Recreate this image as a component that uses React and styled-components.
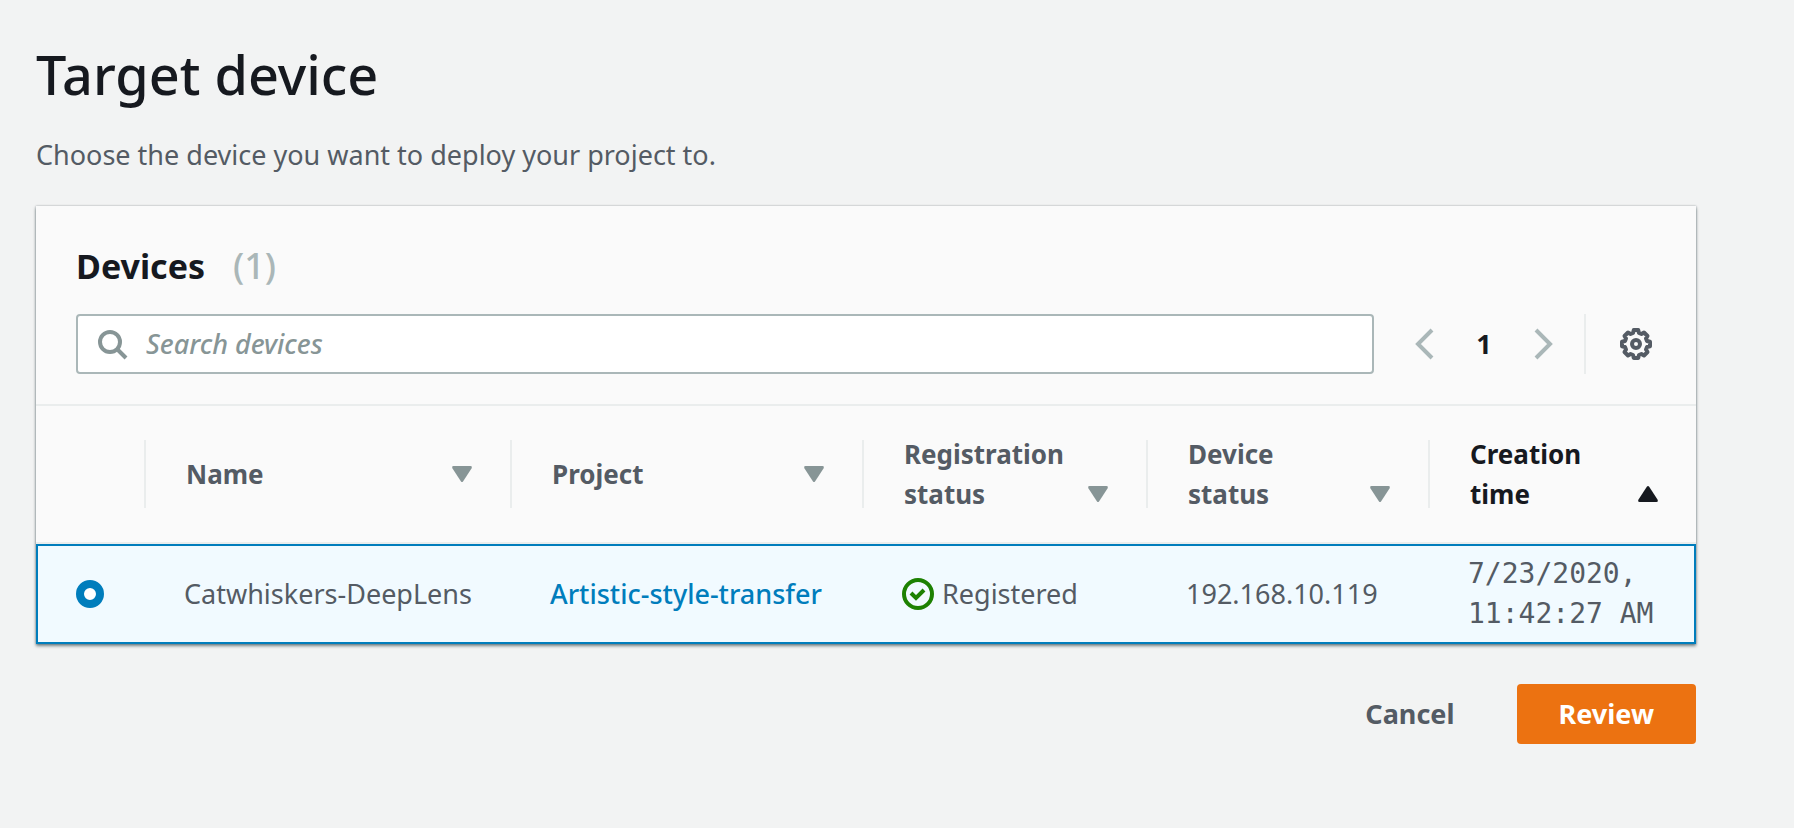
import React, { useState } from "react";
import styled, { createGlobalStyle } from "styled-components";

const color = {
  page: "#f2f3f3",
  panel: "#fafafa",
  line: "#eaeded",
  ink: "#16191f",
  text: "#545b64",
  muted: "#879596",
  faint: "#aab7b8",
  blue: "#007dbc",
  selected: "#f1faff",
  green: "#1d8102",
  orange: "#ec7211",
};

const GlobalStyle = createGlobalStyle`
  *, *::before, *::after { box-sizing: border-box; }
  body {
    margin: 0;
    background: ${color.page};
    color: ${color.text};
    font-family: "Noto Sans", "Open Sans", sans-serif;
    font-size: 27px;
    font-weight: 400;
    line-height: 40px;
  }
  button, input { font: inherit; color: inherit; }
`;

const Page = styled.main`
  padding: 38px 98px 84px 36px;
`;

const PageTitle = styled.h1`
  margin: 0;
  color: ${color.ink};
  font-size: 54px;
  font-weight: 500;
  line-height: 72px;
`;

const Intro = styled.p`
  margin: 25px 0 31px;
`;

const Panel = styled.section`
  background: ${color.panel};
  box-shadow: 0 2px 3px rgba(0, 28, 36, 0.5), 0 0 2px rgba(0, 28, 36, 0.3);
`;

const PanelHeader = styled.header`
  padding: 36px 40px 30px;
  border-bottom: 2px solid ${color.line};
`;

const PanelTitle = styled.h2`
  display: flex;
  gap: 28px;
  margin: 0 0 24px;
  color: ${color.ink};
  font-size: 34px;
  font-weight: 700;
  line-height: 48px;
`;

const Count = styled.span`
  color: ${color.faint};
  font-size: 36px;
  font-weight: 500;
`;

const Toolbar = styled.div`
  display: flex;
  align-items: center;
`;

const SearchBox = styled.label`
  display: flex;
  flex: 1;
  align-items: center;
  gap: 16px;
  height: 60px;
  padding: 0 20px;
  border: 2px solid ${color.faint};
  border-radius: 4px;
  background: #fff;
  color: ${color.muted};
`;

const SearchInput = styled.input`
  flex: 1;
  min-width: 0;
  padding: 0;
  border: 0;
  outline: 0;
  background: none;
  color: ${color.ink};

  &::placeholder {
    color: ${color.muted};
    font-style: italic;
    font-weight: 500;
    opacity: 1;
  }
`;

const Pagination = styled.nav`
  display: flex;
  align-items: center;
  gap: 28px;
  height: 60px;
  padding: 0 24px 0 34px;
  border-right: 2px solid ${color.line};
`;

const IconButton = styled.button`
  display: flex;
  padding: 0;
  border: 0;
  background: none;
  color: ${(p) => p.$tone};
  cursor: pointer;
`;

const PageNumber = styled.button`
  width: 32px;
  padding: 0;
  border: 0;
  background: none;
  color: ${color.ink};
  font-weight: 700;
`;

const Settings = styled.div`
  padding: 0 4px 0 34px;
`;

const Table = styled.table`
  width: 100%;
  table-layout: fixed;
  border-collapse: separate;
  border-spacing: 0;
  text-align: left;
`;

const Column = styled.col`
  width: ${(p) => p.$width}px;
`;

const HeadCell = styled.th`
  height: 138px;
  padding: 0;
  border-bottom: 2px solid ${color.line};
`;

const HeadContent = styled.div`
  display: flex;
  align-items: center;
  height: 68px;
  padding: 0 38px 0 40px;
  border-right: ${(p) => (p.$last ? "0" : `2px solid ${color.line}`)};
`;

const SortButton = styled.button`
  display: flex;
  flex: 1;
  align-items: flex-end;
  justify-content: space-between;
  gap: 12px;
  padding: 0;
  border: 0;
  background: none;
  color: ${(p) => (p.$active ? color.ink : color.text)};
  font-size: 26px;
  font-weight: 700;
  text-align: left;
  cursor: pointer;
`;

const SortIcon = styled.svg`
  flex: none;
  width: 20px;
  height: 40px;
  fill: ${(p) => (p.$active ? color.ink : color.muted)};
`;

const Cell = styled.td`
  height: 100px;
  padding: 0 36px 0 38px;
  border: solid ${color.blue};
  border-width: 2px 0;
  background: ${color.selected};

  &:first-child {
    border-left-width: 2px;
  }
  &:last-child {
    padding-right: 0;
    border-right-width: 2px;
  }
`;

const Radio = styled.input`
  display: block;
  width: 28px;
  height: 28px;
  margin: 0;
  border: 8px solid ${color.blue};
  border-radius: 50%;
  background: #fff;
  appearance: none;
`;

const ProjectLink = styled.a`
  color: ${color.blue};
  font-weight: 500;
  text-decoration: none;
`;

const Status = styled.span`
  display: flex;
  align-items: center;
  gap: 8px;
`;

const Timestamp = styled.time`
  display: block;
  font-family: "DejaVu Sans Mono", "Liberation Mono", monospace;
  font-size: 28px;
`;

const Actions = styled.footer`
  display: flex;
  justify-content: flex-end;
  gap: 20px;
  margin-top: 40px;
`;

const Button = styled.button`
  height: 60px;
  padding: 0 42px;
  border: 0;
  border-radius: 4px;
  background: ${(p) => (p.$primary ? color.orange : "transparent")};
  color: ${(p) => (p.$primary ? "#fff" : color.text)};
  font-weight: 700;
  cursor: pointer;
`;

const SearchIcon = () => (
  <svg width="32" height="32" viewBox="0 0 32 32" fill="none" stroke="currentColor" strokeWidth="4" aria-hidden="true">
    <circle cx="12" cy="14" r="10" />
    <path d="M19 21l9 9" />
  </svg>
);

const Chevron = ({ d }) => (
  <svg width="32" height="32" viewBox="0 0 32 32" fill="none" stroke="currentColor" strokeWidth="4" aria-hidden="true">
    <path d={d} />
  </svg>
);

const GearIcon = () => (
  <svg width="32" height="32" viewBox="0 0 32 32" fill="none" stroke="currentColor" strokeWidth="4" strokeLinejoin="round" aria-hidden="true">
    <path d="M13.8 2h4.4l.8 3 2.400 1 2.600-1.500 3.500 3.500L26 10.600l1 2.400 3 .8v4.400l-3 .8-1 2.400 1.500 2.600-3.500 3.500-2.600-1.500-2.400 1-.8 3h-4.400l-.8-3-2.400-1L8 27.500 4.500 24 6 21.400 5 19l-3-.8v-4.400l3-.8 1-2.400L4.500 8 8 4.500 10.600 6 13 5z" />
    <circle cx="16" cy="16" r="4" />
  </svg>
);

const CheckIcon = () => (
  <svg width="32" height="32" viewBox="0 0 32 32" fill="none" stroke={color.green} strokeWidth="4" aria-hidden="true">
    <circle cx="16" cy="16" r="14" />
    <path d="M9 15l5 5 8-8" />
  </svg>
);

const columns = [
  { label: "Name", width: 366 },
  { label: "Project", width: 352 },
  { label: "Registration status", width: 284 },
  { label: "Device status", width: 282 },
  { label: "Creation time", width: 266, active: true },
];

const devices = [
  {
    name: "Catwhiskers-DeepLens",
    project: "Artistic-style-transfer",
    registration: "Registered",
    status: "192.168.10.119",
    created: "7/23/2020, 11:42:27 AM",
  },
];

export default function App() {
  const [query, setQuery] = useState("");
  const [selected, setSelected] = useState(devices[0].name);

  return (
    <>
      <GlobalStyle />
      <Page>
        <PageTitle>Target device</PageTitle>
        <Intro>Choose the device you want to deploy your project to.</Intro>
        <Panel>
          <PanelHeader>
            <PanelTitle>
              Devices <Count>({devices.length})</Count>
            </PanelTitle>
            <Toolbar>
              <SearchBox>
                <SearchIcon />
                <SearchInput
                  type="text"
                  aria-label="Search devices"
                  placeholder="Search devices"
                  value={query}
                  onChange={(e) => setQuery(e.target.value)}
                />
              </SearchBox>
              <Pagination aria-label="Pages">
                <IconButton $tone={color.faint} aria-label="Previous page">
                  <Chevron d="M24 2L10 16l14 14" />
                </IconButton>
                <PageNumber>1</PageNumber>
                <IconButton $tone={color.faint} aria-label="Next page">
                  <Chevron d="M8 2l14 14L8 30" />
                </IconButton>
              </Pagination>
              <Settings>
                <IconButton $tone={color.text} aria-label="Settings">
                  <GearIcon />
                </IconButton>
              </Settings>
            </Toolbar>
          </PanelHeader>
          <Table>
            <colgroup>
              <Column $width={110} />
              {columns.map((c) => (
                <Column key={c.label} $width={c.width} />
              ))}
            </colgroup>
            <thead>
              <tr>
                <HeadCell aria-label="Selection">
                  <HeadContent />
                </HeadCell>
                {columns.map((c) => (
                  <HeadCell key={c.label} scope="col" aria-sort={c.active ? "ascending" : "none"}>
                    <HeadContent $last={c.active}>
                      <SortButton $active={c.active}>
                        {c.label}
                        <SortIcon $active={c.active} viewBox="0 0 20 40" aria-hidden="true">
                          <path
                            d={
                              c.active
                                ? "M9 12.500q1-1 2 0l8.500 13q1 2.500-1 2.500h-17q-2 0-1-2.500z"
                                : "M9 27.500q1 1 2 0l8.500-13q1-2.500-1-2.500h-17q-2 0-1 2.500z"
                            }
                          />
                        </SortIcon>
                      </SortButton>
                    </HeadContent>
                  </HeadCell>
                ))}
              </tr>
            </thead>
            <tbody>
              {devices.map((d) => (
                <tr key={d.name}>
                  <Cell>
                    <Radio
                      type="radio"
                      name="device"
                      aria-label={d.name}
                      checked={selected === d.name}
                      onChange={() => setSelected(d.name)}
                    />
                  </Cell>
                  <Cell>{d.name}</Cell>
                  <Cell>
                    <ProjectLink href="#project">{d.project}</ProjectLink>
                  </Cell>
                  <Cell>
                    <Status>
                      <CheckIcon />
                      {d.registration}
                    </Status>
                  </Cell>
                  <Cell>{d.status}</Cell>
                  <Cell>
                    <Timestamp>{d.created}</Timestamp>
                  </Cell>
                </tr>
              ))}
            </tbody>
          </Table>
        </Panel>
        <Actions>
          <Button>Cancel</Button>
          <Button $primary>Review</Button>
        </Actions>
      </Page>
    </>
  );
}
